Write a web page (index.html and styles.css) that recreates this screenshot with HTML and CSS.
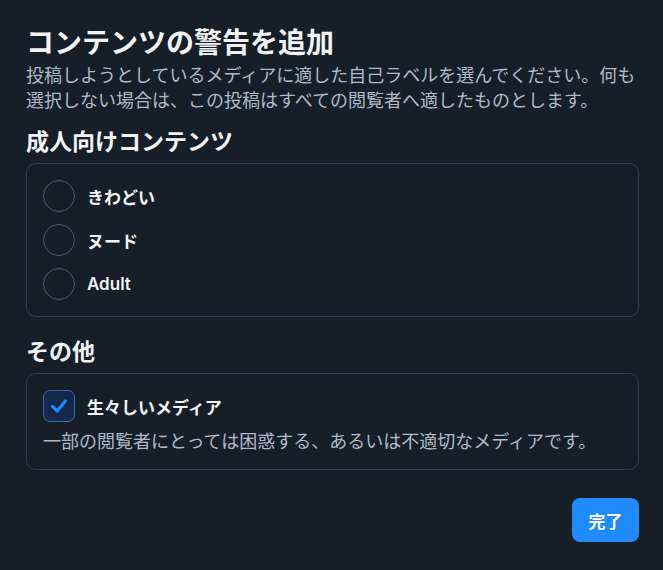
FILE: index.html
```html
<!DOCTYPE html>
<html lang="ja">
<head>
<meta charset="utf-8">
<link rel="stylesheet" href="styles.css">
</head>
<body>
<div class="dialog">
  <h1 class="title">コンテンツの警告を追加</h1>
  <p class="subtitle">投稿しようとしているメディアに適した自己ラベルを選んでください。何も選択しない場合は、この投稿はすべての閲覧者へ適したものとします。</p>

  <h2 class="section-title">成人向けコンテンツ</h2>
  <div class="box">
    <div class="option"><span class="radio"></span><span class="label">きわどい</span></div>
    <div class="option"><span class="radio"></span><span class="label">ヌード</span></div>
    <div class="option"><span class="radio"></span><span class="label label--latin">Adult</span></div>
  </div>

  <h2 class="section-title section-title--other">その他</h2>
  <div class="box">
    <div class="option">
      <span class="checkbox">
        <svg viewBox="0 0 24 24" width="22" height="22"><path d="M5 12.5 L10 17.5 L19 6.5" fill="none" stroke="#208bfe" stroke-width="3.4" stroke-linecap="round" stroke-linejoin="round"/></svg>
      </span>
      <span class="label">生々しいメディア</span>
    </div>
    <p class="desc">一部の閲覧者にとっては困惑する、あるいは不適切なメディアです。</p>
  </div>

  <div class="actions">
    <button class="done">完了</button>
  </div>
</div>
</body>
</html>
```

FILE: styles.css
```css
html, body {
  margin: 0;
  padding: 0;
  background: #161e27;
}
body {
  font-family: "Noto Sans CJK JP", "Inter", "Noto Sans", sans-serif;
  color: #f1f3f5;
}
.dialog {
  display: flex;
  flex-direction: column;
  padding: 24px 24px 0 26px;
}
.title {
  margin: 0;
  font-size: 28px;
  line-height: 34px;
  font-weight: 700;
  color: #f1f3f5;
}
.subtitle {
  margin: 4px 0 0;
  font-size: 18px;
  line-height: 25px;
  color: #aebbc9;
  font-weight: 400;
}
.section-title {
  margin: 13px 0 8px;
  font-size: 23px;
  line-height: 30px;
  font-weight: 700;
  color: #f1f3f5;
}
.section-title--other {
  margin-top: 18px;
}
.box {
  border: 1px solid #323f4e;
  border-radius: 10px;
  padding: 16px;
  display: flex;
  flex-direction: column;
  gap: 12px;
}
.option {
  display: flex;
  align-items: center;
  height: 32px;
  gap: 12px;
}
.radio {
  width: 30px;
  height: 30px;
  border: 1px solid #4a5868;
  border-radius: 50%;
  flex: none;
}
.checkbox {
  width: 30px;
  height: 30px;
  border: 1px solid #2d6cb8;
  border-radius: 7px;
  background: #14284a;
  display: flex;
  align-items: center;
  justify-content: center;
  flex: none;
}
.label {
  font-family: "Noto Sans CJK JP", sans-serif;
  font-size: 17px;
  font-weight: 700;
  color: #f1f3f5;
}
.label--latin {
  font-family: "Inter", "Noto Sans CJK JP", sans-serif;
  font-weight: 600;
}
.desc {
  margin: -6px 0 0;
  font-size: 18px;
  line-height: 25px;
  color: #aebbc9;
}
.actions {
  display: flex;
  justify-content: flex-end;
  margin-top: 28px;
}
.done {
  width: 67px;
  height: 44px;
  border: none;
  border-radius: 8px;
  background: #208bfe;
  color: #ffffff;
  font-family: "Noto Sans CJK JP", sans-serif;
  font-size: 17px;
  font-weight: 700;
  padding: 0;
}
```
